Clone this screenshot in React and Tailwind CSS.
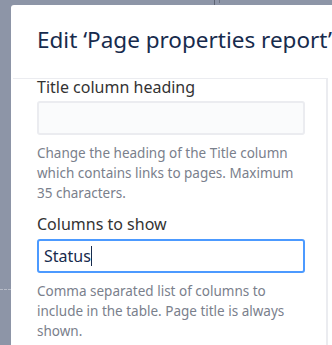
import React from 'react';

const font = { fontFamily: '"Noto Sans", "Open Sans", sans-serif' };

const Field = ({ label, value, focused, help, inputGap }) => (
  <div className="flex flex-col">
    <label className="text-[16px] leading-[16px] text-[#333333]">{label}</label>
    <div
      className={`${inputGap} h-[34px] w-[268px] rounded-[3px] flex items-center px-[5px] text-[16px] text-[#172b4d] ${
        focused ? 'border-2 border-[#4c9aff] bg-white' : 'border-2 border-[#ebecf0] bg-[#fafbfc]'
      }`}
    >
      {value}
      {focused && <span className="w-px h-[20px] bg-[#172b4d]" />}
    </div>
    <p className="mt-[8px] w-[262px] text-[13.5px] leading-[20px] text-[#7a808c]">{help}</p>
  </div>
);

const App = () => {
  return (
    <div className="relative h-[345px] w-[332px] overflow-hidden bg-[#8d95a7] pl-[11px] pt-[5px]" style={font}>
      <div className="absolute left-0 top-[289px] w-[11px] border-t border-dashed border-[#b7bcc8]" />
      <div className="absolute left-[214px] top-0 h-[5px] w-px bg-[#5d6474]" />
      <div className="absolute left-[219px] top-0 h-[3px] w-px bg-[#6d7484]" />
      <div className="h-full w-[330px] bg-white rounded-tl-[3px]">
        <header className="h-[73px] pl-[26px] pt-[20px] whitespace-nowrap overflow-hidden">
          <h1 className="text-[22.5px] leading-[30px] text-[#172b4d]">Edit ‘Page properties report’</h1>
        </header>
        <div className="ml-[2px] h-full w-[315px] border-t border-r-2 border-[#ebecf0] pl-[24px] flex flex-col gap-[13px]">
          <Field
            label="Title column heading"
            value=""
            inputGap="mt-[6px]"
            help="Change the heading of the Title column which contains links to pages. Maximum 35 characters."
          />
          <Field
            label="Columns to show"
            value="Status"
            focused
            inputGap="mt-[7px]"
            help="Comma separated list of columns to include in the table. Page title is always shown."
          />
        </div>
      </div>
    </div>
  );
};

export default App;
